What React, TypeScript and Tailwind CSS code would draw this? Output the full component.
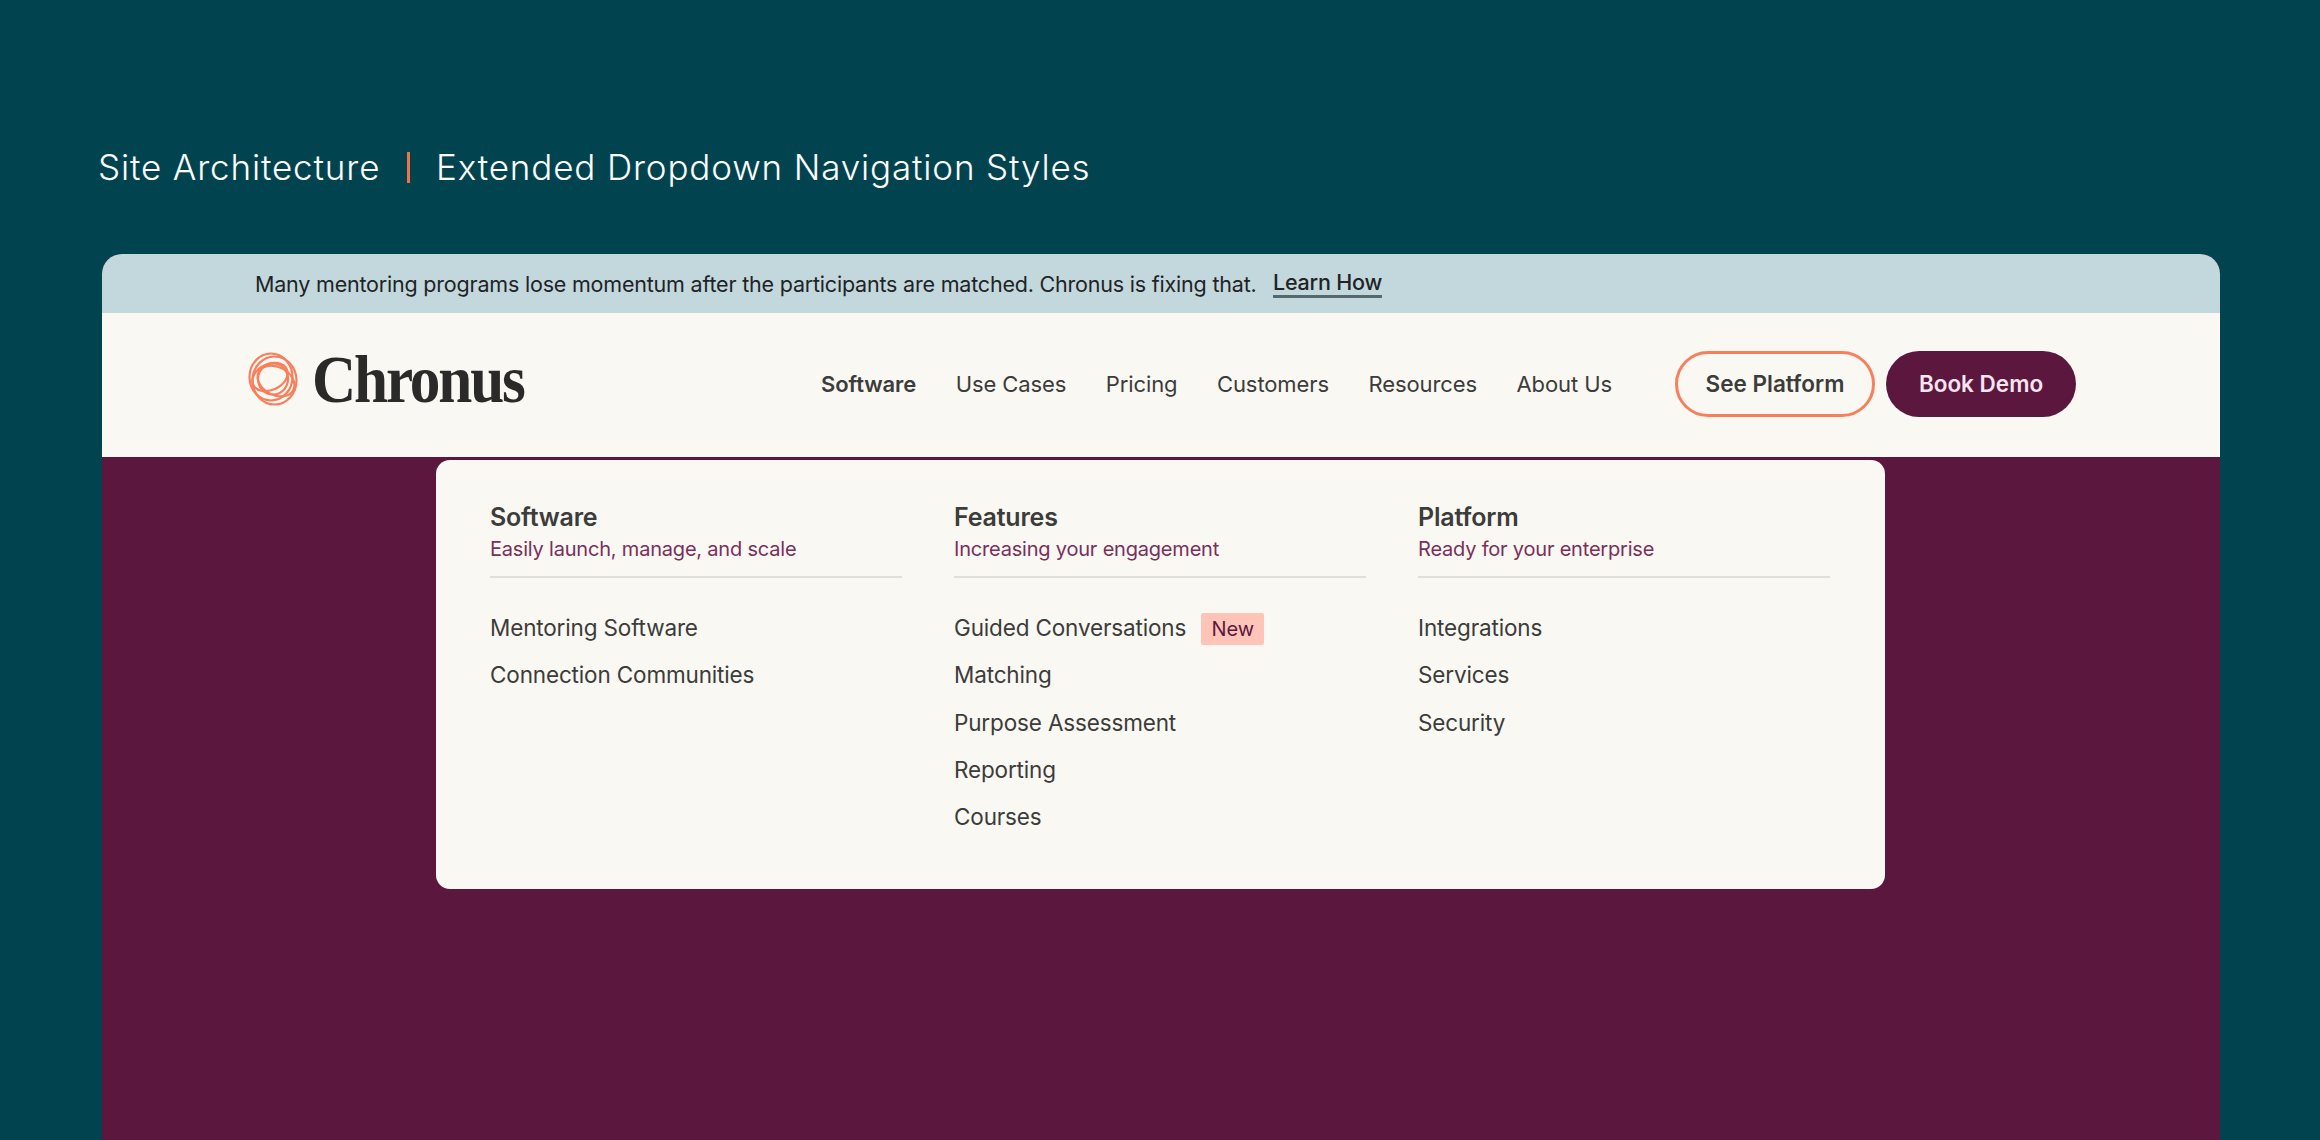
export default function App() {
  const nav = [
    { t: "Software", c: "font-semibold" },
    { t: "Use Cases", c: "" },
    { t: "Pricing", c: "" },
    { t: "Customers", c: "" },
    { t: "Resources", c: "" },
    { t: "About Us", c: "" },
  ];
  const cols = [
    { h: "Software", s: "Easily launch, manage, and scale", items: ["Mentoring Software", "Connection Communities"] },
    { h: "Features", s: "Increasing your engagement", items: ["Guided Conversations", "Matching", "Purpose Assessment", "Reporting", "Courses"] },
    { h: "Platform", s: "Ready for your enterprise", items: ["Integrations", "Services", "Security"] },
  ];
  return (
    <div className="h-[1140px] w-[2320px] overflow-hidden bg-[#024350] font-['Inter',sans-serif] text-[#3c3c3a]">
      <div className="flex h-[254px] items-start pl-[98px] pt-[145px] text-[35px] font-light leading-[44px] tracking-[0.85px] text-white">
        <span className="w-[283px] whitespace-nowrap">Site Architecture</span>
        <span className="ml-[26px] mt-[7px] h-[31px] w-[3px] bg-[#f0744a]" />
        <span className="ml-[26px] whitespace-nowrap">Extended Dropdown Navigation Styles</span>
      </div>
      <div className="ml-[102px] flex h-[886px] w-[2118px] flex-col overflow-hidden rounded-t-[20px] bg-[#5c173f]">
        <div className="flex h-[59px] items-center bg-[#c2d8dc] pl-[153px] pt-[1px] text-[21.5px] text-[#1f2326]">
          <span className="w-[1018px] whitespace-nowrap tracking-[-0.2px]">Many mentoring programs lose momentum after the participants are matched. Chronus is fixing that.</span>
          <span className="border-b-[3px] border-[#55686d] font-medium leading-[25px] tracking-[-0.2px]">Learn How</span>
        </div>
        <div className="flex h-[144px] items-center bg-[#f9f8f3] pb-[2px] pl-[146px]">
          <div className="mb-[10px] flex items-center">
            <svg width="50" height="54" viewBox="0 0 50 54" fill="none" stroke="#f97f5c" strokeWidth="2.2">
              <ellipse cx="23" cy="25" rx="21.5" ry="23.5" />
              <ellipse cx="26.5" cy="28.5" rx="22" ry="24" />
              <ellipse cx="25" cy="27" rx="15" ry="15.5" />
              <ellipse cx="22" cy="25" rx="18.5" ry="13" transform="rotate(-25 22 25)" />
              <ellipse cx="28" cy="29" rx="19.5" ry="14" transform="rotate(28 28 29)" />
            </svg>
            <span className="ml-[14px] w-[211px] origin-left scale-x-[0.9] whitespace-nowrap font-['Liberation_Serif',serif] text-[68px] font-bold leading-none tracking-[-2.4px] text-[#2a2a28]">Chronus</span>
          </div>
          <div className="ml-[298px] flex w-[791px] items-center justify-between text-[22px] tracking-[-0.1px]">
            {nav.map((n) => (
              <span key={n.t} className={n.c}>{n.t}</span>
            ))}
          </div>
          <div className="ml-[63px] flex h-[66px] w-[200px] items-center justify-center rounded-full border-[3px] border-[#f97f5c] text-[22.5px] font-semibold">See Platform</div>
          <div className="ml-[11px] flex h-[66px] w-[190px] items-center justify-center rounded-full bg-[#5c173f] text-[22.5px] font-semibold text-[#f7e6f0]">Book Demo</div>
        </div>
        <div className="ml-[334px] mt-[3px] h-[429px] w-[1449px] rounded-[14px] bg-[#f9f8f3] pl-[54px] pt-[39px]">
          <div className="grid w-[1340px] grid-cols-3 gap-x-[52px]">
            {cols.map((c) => (
              <div key={c.h}>
                <div className="text-[25px] font-semibold leading-[36px] tracking-[-0.2px]">{c.h}</div>
                <div className="mt-[1px] text-[20px] leading-[26px] tracking-[-0.2px] text-[#7b2f5b]">{c.s}</div>
                <div className="mt-[14px] h-[2px] bg-[#dfdfdb]" />
                <div className="mt-[33px] flex flex-col gap-[13.2px]">
                  {c.items.map((i) => (
                    <div key={i} className="flex h-[34px] items-center text-[22.5px] tracking-[-0.15px]">
                      <span>{i}</span>
                      {i === "Guided Conversations" && (
                        <span className="ml-[15px] mt-[1px] flex h-[32px] w-[63px] items-center justify-center rounded-[2px] bg-[#ffc4b8] text-[20px] text-[#5c173f]">New</span>
                      )}
                    </div>
                  ))}
                </div>
              </div>
            ))}
          </div>
        </div>
      </div>
    </div>
  );
}
